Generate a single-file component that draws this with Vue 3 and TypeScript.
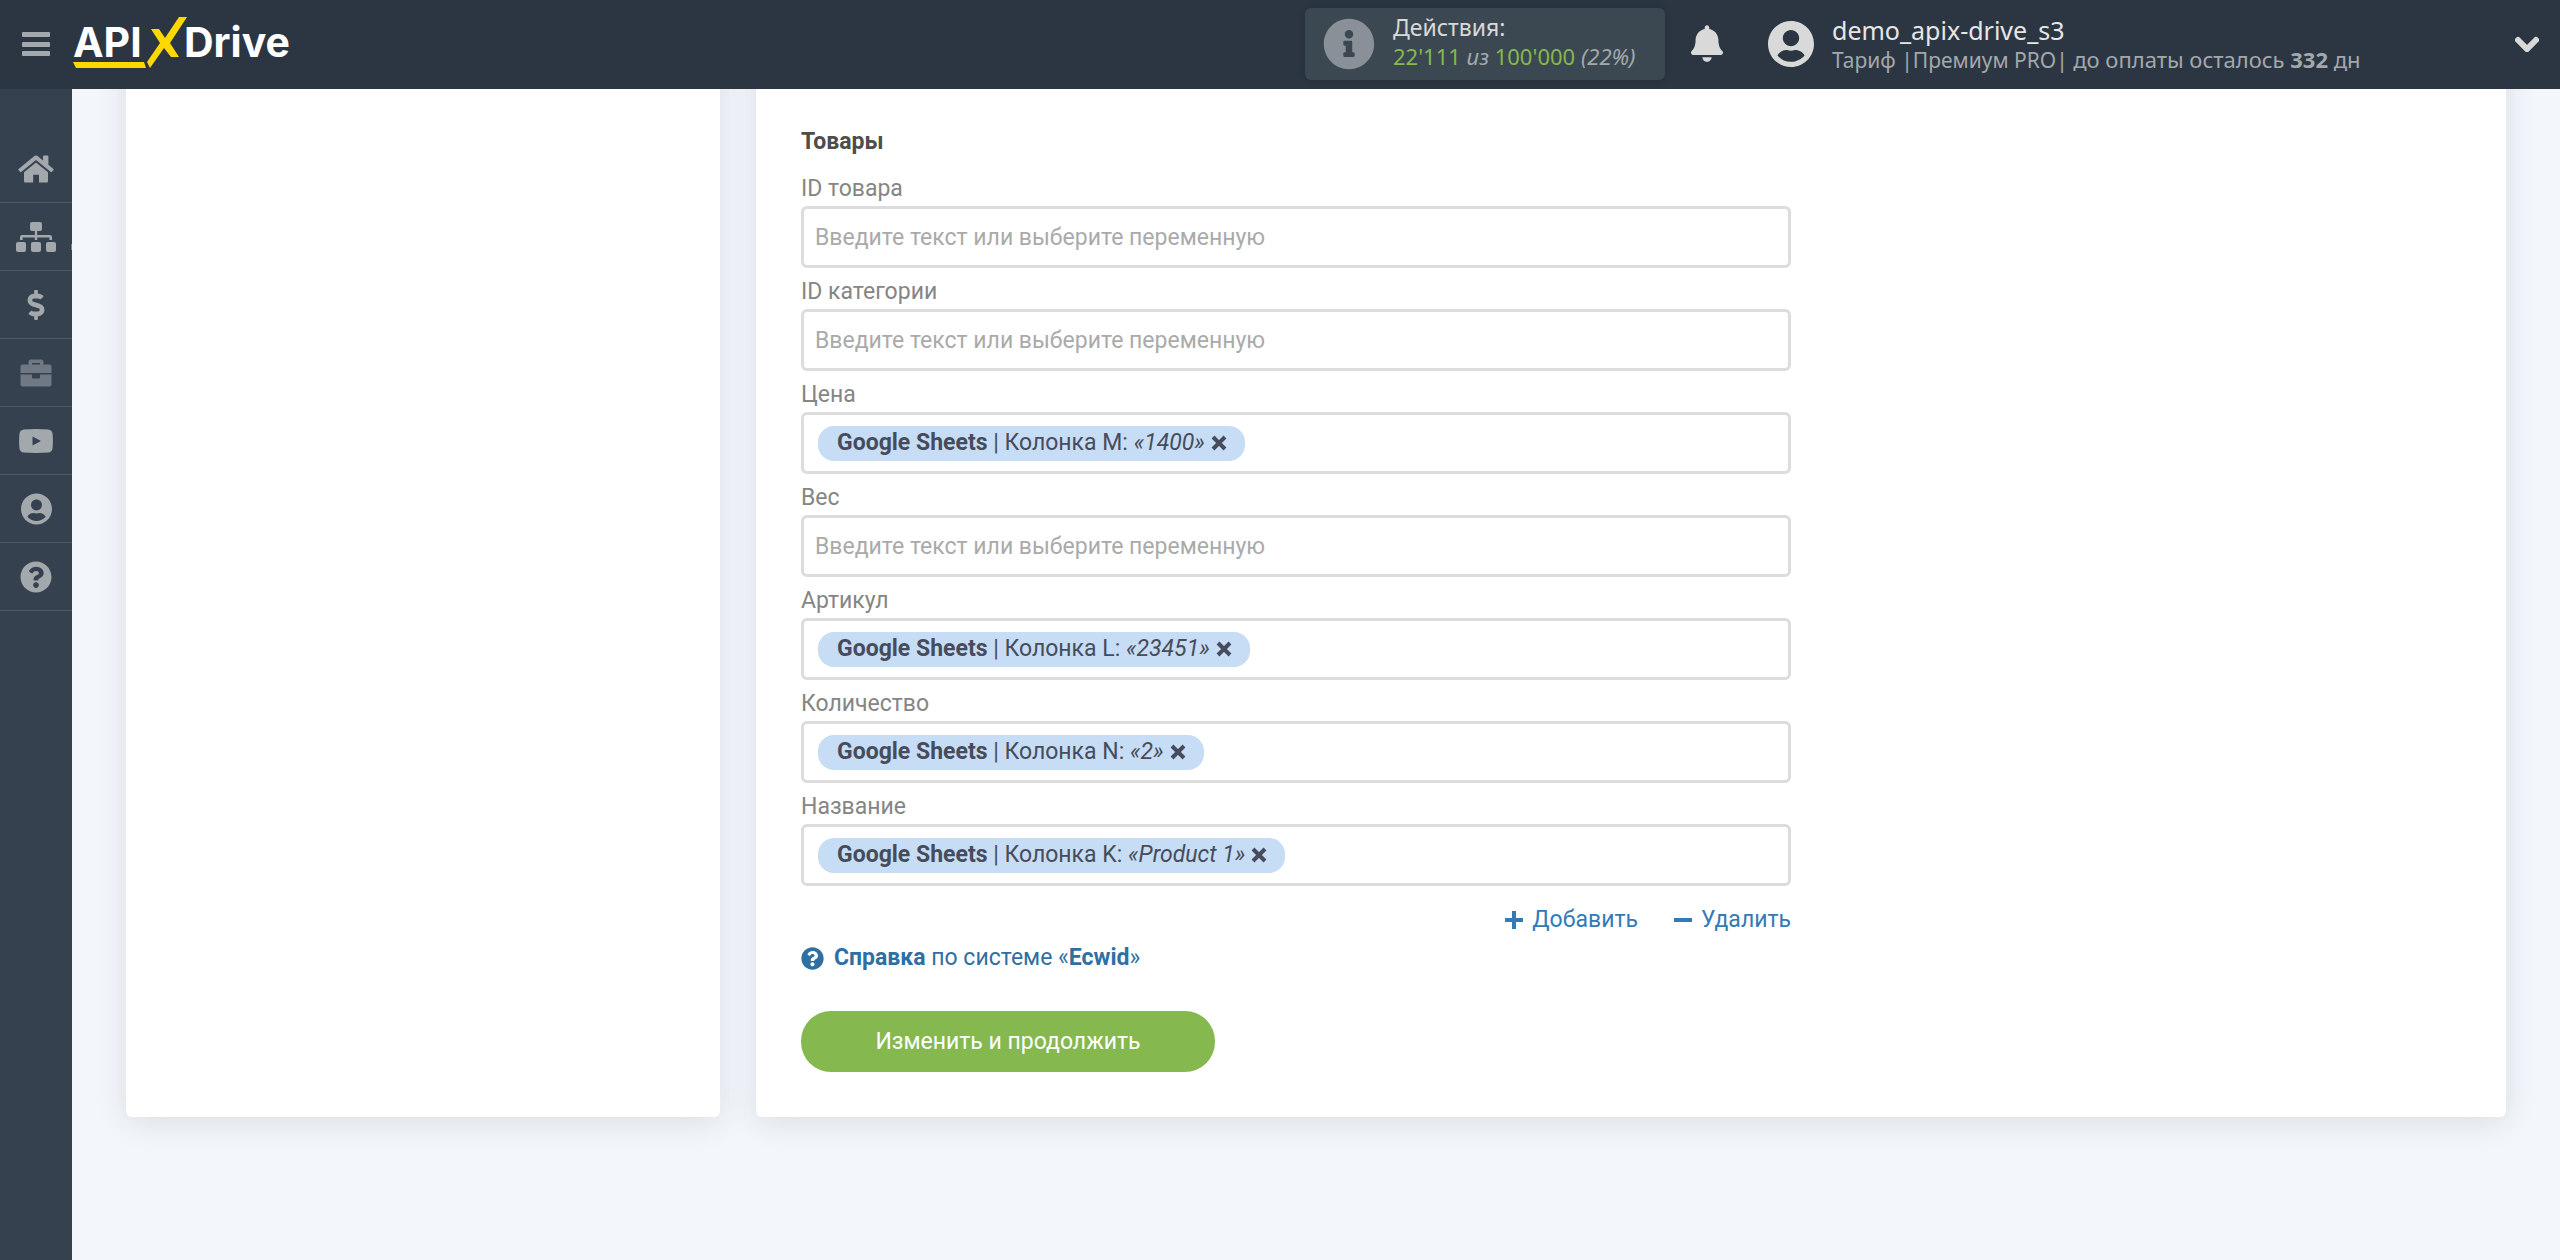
<script setup lang="ts">
import { ref } from 'vue'

interface Chip {
  source: string
  column: string
  sample: string
}

interface Field {
  id: string
  label: string
  chip?: Chip
}

interface NavItem {
  id: string
  title: string
  muted?: boolean
  submenu?: boolean
}

const nav: NavItem[] = [
  { id: 'home', title: 'Главная' },
  { id: 'links', title: 'Связи', submenu: true },
  { id: 'billing', title: 'Оплата' },
  { id: 'tools', title: 'Инструменты', muted: true },
  { id: 'video', title: 'Видео' },
  { id: 'profile', title: 'Профиль' },
  { id: 'help', title: 'Помощь' },
]

const fields = ref<Field[]>([
  { id: 'product-id', label: 'ID товара' },
  { id: 'category-id', label: 'ID категории' },
  { id: 'price', label: 'Цена', chip: { source: 'Google Sheets', column: 'Колонка M', sample: '1400' } },
  { id: 'weight', label: 'Вес' },
  { id: 'sku', label: 'Артикул', chip: { source: 'Google Sheets', column: 'Колонка L', sample: '23451' } },
  { id: 'quantity', label: 'Количество', chip: { source: 'Google Sheets', column: 'Колонка N', sample: '2' } },
  { id: 'name', label: 'Название', chip: { source: 'Google Sheets', column: 'Колонка K', sample: 'Product 1' } },
])

const userPath =
  'M248 8C111 8 0 119 0 256s111 248 248 248 248-111 248-248S385 8 248 8zm0 96c48.6 0 88 39.4 88 88s-39.4 88-88 88-88-39.4-88-88 39.4-88 88-88zm0 344c-58.7 0-111.3-26.6-146.5-68.2 18.8-35.4 55.6-59.8 98.5-59.8 2.4 0 4.8.4 7.1 1.1 13 4.2 26.6 6.9 40.9 6.9 14.3 0 28-2.7 40.9-6.9 2.3-.7 4.7-1.1 7.1-1.1 42.9 0 79.7 24.4 98.5 59.8C359.3 421.4 306.7 448 248 448z'

const questionPath =
  'M504 256c0 136.997-111.043 248-248 248S8 392.997 8 256C8 119.083 119.043 8 256 8s248 111.083 248 248zM262.655 90c-54.497 0-89.255 22.957-116.549 63.758-3.536 5.286-2.353 12.415 2.715 16.258l34.699 26.31c5.205 3.947 12.621 3.008 16.665-2.122 17.864-22.658 30.113-35.797 57.303-35.797 20.429 0 45.698 13.148 45.698 32.958 0 14.976-12.363 22.667-32.534 33.976C247.128 238.528 216 254.941 216 296v4c0 6.627 5.373 12 12 12h56c6.627 0 12-5.373 12-12v-1.333c0-28.462 83.186-29.647 83.186-106.667 0-58.002-60.165-102-116.531-102zM256 338c-25.365 0-46 20.635-46 46 0 25.364 20.635 46 46 46s46-20.636 46-46c0-25.365-20.635-46-46-46z'

function clearChip(field: Field) {
  field.chip = undefined
}
</script>

<template>
  <div class="page">
    <header class="topbar">
      <button class="icon-button menu" type="button" aria-label="Меню">
        <svg width="28" height="24" viewBox="0 0 28 24">
          <rect width="28" height="5" rx="1" />
          <rect y="10" width="28" height="5" rx="1" />
          <rect y="19" width="28" height="5" rx="1" />
        </svg>
      </button>
      <a class="logo" href="#" aria-label="APIXDrive">
        <svg width="222" height="56" viewBox="0 0 222 56">
          <text x="0" y="41">API</text>
          <text x="111" y="41">Drive</text>
          <path class="mark" d="M0 46h71l2 6H3z" />
          <path class="mark" d="M78 13h8l6 9 14-21h8L97 27l9 14h-8l-7-9-14 20-3-6 13-19z" />
        </svg>
      </a>

      <div class="actions">
        <svg class="info" width="52" height="52" viewBox="0 0 512 512">
          <path d="M256 8C119.043 8 8 119.083 8 256c0 136.997 111.043 248 248 248s248-111.003 248-248C504 119.083 392.957 8 256 8zm0 110c23.196 0 42 18.804 42 42s-18.804 42-42 42-42-18.804-42-42 18.804-42 42-42zm56 254c0 6.627-5.373 12-12 12h-88c-6.627 0-12-5.373-12-12v-24c0-6.627 5.373-12 12-12h12v-64h-12c-6.627 0-12-5.373-12-12v-24c0-6.627 5.373-12 12-12h64c6.627 0 12 5.373 12 12v100h12c6.627 0 12 5.373 12 12v24z" />
        </svg>
        <div>
          <div class="actions-title">Действия:</div>
          <div class="actions-count">
            <span class="green">22'111</span> <i>из</i> <span class="green">100'000</span> <i>(22%)</i>
          </div>
        </div>
      </div>

      <button class="icon-button bell" type="button" aria-label="Уведомления">
        <svg width="32" height="37" viewBox="0 0 448 512">
          <path d="M224 512c35.32 0 63.97-28.65 63.97-64H160.03c0 35.35 28.65 64 63.97 64zm215.39-149.71c-19.32-20.76-55.47-51.99-55.47-154.29 0-77.7-54.48-139.9-127.94-155.16V32c0-17.67-14.32-32-31.98-32s-31.98 14.33-31.98 32v20.84C118.56 68.1 64.08 130.3 64.08 208c0 102.3-36.15 133.53-55.47 154.29-6 6.45-8.66 14.16-8.61 21.71.11 16.4 12.98 32 32.1 32h383.8c19.12 0 32-15.6 32.1-32 .05-7.55-2.61-15.27-8.61-21.71z" />
        </svg>
      </button>

      <div class="account">
        <svg width="46" height="48" viewBox="0 0 496 512"><path :d="userPath" /></svg>
        <div class="account-text">
          <div class="account-name">demo_apix-drive_s3</div>
          <div class="account-plan">Тариф |Премиум PRO| <span class="account-due">до оплаты осталось <b>332</b> дн</span></div>
        </div>
        <button class="icon-button chevron" type="button" aria-label="Меню профиля">
          <svg width="24" height="16" viewBox="0 0 24 16"><path d="M3 4l9 9 9-9" /></svg>
        </button>
      </div>
    </header>

    <div class="body">
      <nav class="sidebar">
        <a v-for="item in nav" :key="item.id" href="#" :class="{ muted: item.muted, submenu: item.submenu }" :aria-label="item.title">
          <svg v-if="item.id === 'home'" width="36" height="28" viewBox="0 0 36 28">
            <path d="M18 7.6L30 17.2V26.2q0 1.3-1.3 1.3H21V19.8H15.2V27.5H7.3q-1.3 0-1.3-1.3V17.2z" />
            <path d="M16.4 1q1.6-1.2 3.2 0L25 5.4V1.4q0-.9.9-.9h3.6q.9 0 .9.9V9.8l5 4.1q.6.6.1 1.2l-1.5 1.7q-.6.6-1.2.1L18 5.1 3.2 16.9q-.6.5-1.2-.1L.5 15.1q-.5-.6.1-1.2z" />
          </svg>
          <svg v-else-if="item.id === 'links'" width="40" height="30" viewBox="0 0 40 30">
            <rect x="14" width="12" height="9" rx="2" />
            <path d="M18.8 8h2.4v5H34q2 0 2 2v3h-2.6v-2.6H21.2V18h-2.4v-2.6H6.6V18H4v-3q0-2 2-2h12.8z" />
            <rect x="0" y="20" width="10" height="10" rx="2" />
            <rect x="15" y="20" width="10" height="10" rx="2" />
            <rect x="30" y="20" width="10" height="10" rx="2" />
          </svg>
          <svg v-else-if="item.id === 'billing'" width="18" height="30" viewBox="0 0 288 512">
            <path d="M209.2 233.4l-108-31.6C88.7 198.2 80 186.5 80 173.5c0-16.3 13.2-29.5 29.5-29.5h66.3c12.2 0 24.2 3.7 34.2 10.5 6.1 4.1 14.3 3.1 19.5-2l34.8-34c7.1-6.9 6.1-18.4-1.8-24.5C238 74.8 207.4 64.1 176 64V16c0-8.8-7.2-16-16-16h-32c-8.8 0-16 7.2-16 16v48h-2.5C45.8 64-5.4 118.7.5 183.6c4.2 46.1 39.4 83.6 83.8 96.6l102.5 30c12.5 3.7 21.2 15.3 21.2 28.3 0 16.3-13.2 29.5-29.5 29.5h-66.3C100 368 88 364.3 78 357.5c-6.1-4.1-14.3-3.1-19.5 2l-34.8 34c-7.1 6.9-6.1 18.4 1.8 24.5 24.5 19.2 55.1 29.9 86.5 30v48c0 8.8 7.2 16 16 16h32c8.8 0 16-7.2 16-16v-48.2c46.6-.9 90.3-28.6 105.7-72.7 21.5-61.6-14.6-124.8-72.5-141.7z" />
          </svg>
          <svg v-else-if="item.id === 'tools'" width="32" height="28" viewBox="0 0 32 28">
            <path fill-rule="evenodd" d="M8.5 5.5V3Q8.5.5 11 .5h10Q23.5.5 23.5 3v2.5H29q2.5 0 2.5 2.500v6H.5V8Q.5 5.500 3 5.500zM12 5.500h8V4h-8z" />
            <path d="M.5 15.500H12v3q0 1 1 1h6q1 0 1-1v-3h11.500V25q0 2.500-2.500 2.500H3Q.5 27.500.5 25z" />
          </svg>
          <svg v-else-if="item.id === 'video'" width="34" height="24" viewBox="0 0 34 24">
            <path fill-rule="evenodd" d="M5 .4Q17-.3 29 .4q4.2.4 4.6 4.6.6 7 0 14-.4 4.200-4.600 4.600-12 .7-24 0Q.8 23.200.4 19q-.6-7 0-14Q.8.800 5 .400zM13.500 7.500v9l8.500-4.500z" />
          </svg>
          <svg v-else-if="item.id === 'profile'" width="31" height="32" viewBox="0 0 496 512"><path :d="userPath" /></svg>
          <svg v-else width="32" height="32" viewBox="0 0 512 512"><path :d="questionPath" /></svg>
        </a>
      </nav>

      <main class="columns">
        <aside class="card"></aside>
        <section class="card content">
          <form class="form" @submit.prevent>
            <h2>Товары</h2>
            <div v-for="field in fields" :key="field.id" class="field">
              <label :for="field.id">{{ field.label }}</label>
              <div class="box">
                <span v-if="field.chip" class="chip">
                  <span><b>{{ field.chip.source }}</b> | {{ field.chip.column }}: <i>«{{ field.chip.sample }}»</i></span>
                  <button type="button" aria-label="Убрать" @click="clearChip(field)">
                    <svg width="16" height="16" viewBox="0 0 16 16"><path d="M2 2l12 12M14 2L2 14" /></svg>
                  </button>
                </span>
                <input :id="field.id" type="text" :placeholder="field.chip ? '' : 'Введите текст или выберите переменную'" />
              </div>
            </div>
            <div class="row-actions">
              <a href="#">
                <svg width="18" height="18" viewBox="0 0 18 18"><path d="M9 0v18M0 9h18" /></svg>
                Добавить
              </a>
              <a href="#">
                <svg width="18" height="18" viewBox="0 0 18 18"><path d="M0 9h18" /></svg>
                Удалить
              </a>
            </div>
            <a class="help" href="#">
              <svg width="23" height="23" viewBox="0 0 512 512"><path :d="questionPath" /></svg>
              <span><b>Справка</b> по системе «<b>Ecwid</b>»</span>
            </a>
            <button class="submit" type="submit">Изменить и продолжить</button>
          </form>
        </section>
      </main>
    </div>
  </div>
</template>

<style>
body {
  margin: 0;
  background: #f3f6fb;
}
</style>

<style scoped>
* {
  box-sizing: border-box;
}
svg {
  display: block;
  flex: none;
  fill: currentColor;
}
a {
  text-decoration: none;
}
.page {
  min-height: 100vh;
  display: flex;
  flex-direction: column;
  font-family: Roboto, "Noto Sans", sans-serif;
  font-size: 23px;
  line-height: 32px;
}
.topbar {
  position: sticky;
  top: 0;
  z-index: 2;
  display: flex;
  align-items: center;
  height: 89px;
  padding: 0 21px 2px;
  background: #2c3643;
  font-family: "Noto Sans", "Open Sans", sans-serif;
}
.icon-button {
  padding: 0;
  border: 0;
  background: none;
  color: #d9d9d9;
  cursor: pointer;
}
.menu {
  margin-left: 1px;
  margin-right: 23px;
  color: #a3a8ad;
}
.logo {
  margin-right: auto;
}
.logo text {
  fill: #fff;
  font-family: Inter, "Open Sans", sans-serif;
  font-size: 41px;
  font-weight: 700;
}
.logo .mark {
  fill: #ffd800;
}
.actions {
  display: flex;
  align-items: center;
  gap: 18px;
  width: 360px;
  height: 72px;
  margin-right: 26px;
  padding-left: 18px;
  border-radius: 6px;
  background: #3c4851;
  box-shadow: 0 0 6px rgba(0, 0, 0, 0.2);
  white-space: nowrap;
}
.info {
  color: #8a9097;
}
.actions-title {
  color: #d9d9d9;
  font-size: 23px;
  line-height: 29px;
}
.actions-count {
  padding-bottom: 3px;
  color: #a3a8ad;
  font-size: 22px;
  line-height: 29px;
}
.green {
  color: #85b84f;
}
.bell {
  margin-right: 45px;
}
.account {
  flex: 0 0 771px;
  display: flex;
  align-items: center;
  gap: 18px;
  color: #d9d9d9;
  white-space: nowrap;
}
.account-text {
  padding-top: 4px;
}
.account-name {
  color: #e6e6e6;
  font-size: 25px;
  line-height: 29px;
}
.account-plan {
  color: #a3a8ad;
  font-size: 21px;
  line-height: 29px;
}
.account-due {
  font-size: 22px;
}
.chevron {
  margin-left: auto;
}
.chevron path {
  fill: none;
  stroke: currentColor;
  stroke-width: 6;
  stroke-linecap: round;
}
.body {
  flex: 1;
  display: flex;
}
.sidebar {
  flex: 0 0 72px;
  position: relative;
  z-index: 1;
  padding-top: 46px;
  background: #36414f;
}
.sidebar a {
  position: relative;
  display: flex;
  align-items: center;
  justify-content: center;
  height: 68px;
  border-bottom: 1px solid #4d5966;
  color: #a3a8ad;
}
.sidebar a.muted {
  color: #6f7883;
}
.sidebar a.submenu::after {
  content: "";
  position: absolute;
  right: 0;
  bottom: 20px;
  width: 1px;
  height: 6px;
  background: #7d868f;
}
.columns {
  flex: 1;
  min-width: 0;
  display: grid;
  grid-template-columns: minmax(0, 594fr) minmax(0, 1750fr);
  gap: 36px;
  align-self: flex-start;
  margin-top: -40px;
  padding: 0 54px 54px;
}
.card {
  border-radius: 6px;
  background: #fff;
  box-shadow: 0 5px 32px rgba(40, 50, 60, 0.12);
}
.content {
  padding: 76px 45px 45px;
}
.form {
  max-width: 990px;
}
h2 {
  margin: 0 0 12px;
  color: #4d4d4d;
  font-size: 23px;
  font-weight: 700;
  line-height: 34px;
}
.field label {
  display: block;
  color: #858585;
  line-height: 35px;
}
.field + .field {
  margin-top: 6px;
}
.box {
  display: flex;
  align-items: center;
  height: 62px;
  padding: 0 11px;
  border: 3px solid #dcdcdc;
  border-radius: 6px;
  background: #fff;
}
.box input {
  flex: 1;
  min-width: 0;
  height: 50px;
  padding: 0;
  border: 0;
  outline: 0;
  background: none;
  color: #464c5b;
  font: inherit;
}
.box input::placeholder {
  color: #aaa;
  opacity: 1;
}
.chip {
  display: flex;
  align-items: center;
  gap: 6px;
  height: 35px;
  margin-left: 3px;
  padding: 0 18px 0 19px;
  border-radius: 16px;
  background: #c7ddf5;
  color: #464c5b;
  white-space: nowrap;
}
.chip button {
  padding: 0;
  border: 0;
  background: none;
  color: inherit;
  cursor: pointer;
}
.chip path,
.row-actions path {
  fill: none;
  stroke: currentColor;
  stroke-width: 4;
}
.row-actions {
  display: flex;
  justify-content: flex-end;
  gap: 36px;
  margin-top: 18px;
}
.row-actions a {
  display: flex;
  align-items: center;
  gap: 9px;
  color: #337ab7;
}
.help {
  display: flex;
  align-items: center;
  gap: 10px;
  margin-top: 6px;
  color: #2f6fa3;
}
.submit {
  display: block;
  width: 414px;
  height: 61px;
  margin-top: 37px;
  border: 0;
  border-radius: 30px;
  background: #85b84f;
  color: #fff;
  font: inherit;
  cursor: pointer;
}
</style>
